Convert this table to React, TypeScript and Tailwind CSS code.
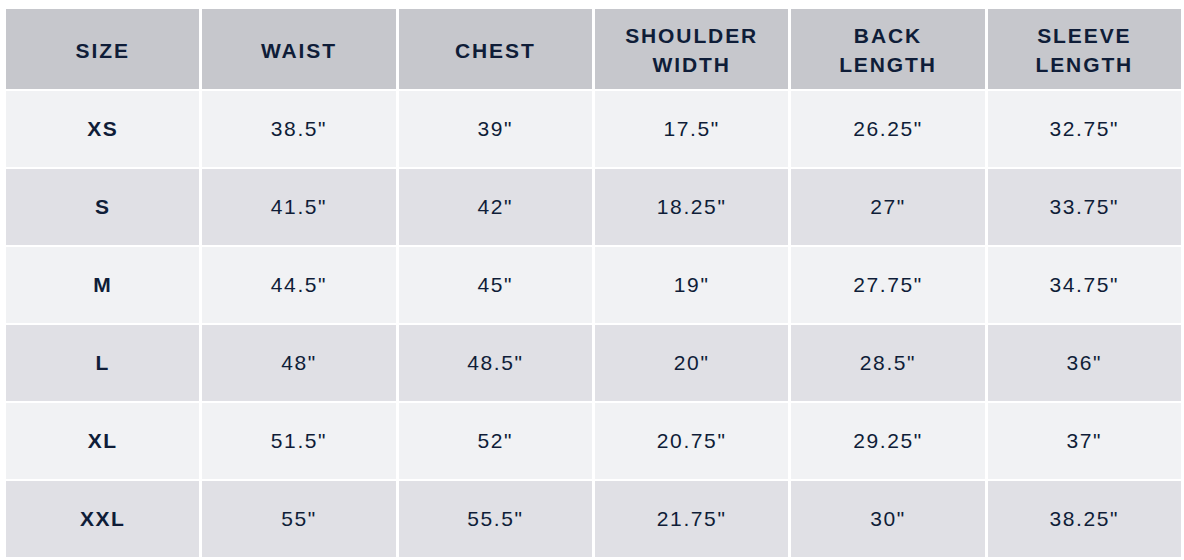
import React from "react";

const headers = [["SIZE"], ["WAIST"], ["CHEST"], ["SHOULDER", "WIDTH"], ["BACK", "LENGTH"], ["SLEEVE", "LENGTH"]];
const rows = [
  ["XS", '38.5"', '39"', '17.5"', '26.25"', '32.75"'],
  ["S", '41.5"', '42"', '18.25"', '27"', '33.75"'],
  ["M", '44.5"', '45"', '19"', '27.75"', '34.75"'],
  ["L", '48"', '48.5"', '20"', '28.5"', '36"'],
  ["XL", '51.5"', '52"', '20.75"', '29.25"', '37"'],
  ["XXL", '55"', '55.5"', '21.75"', '30"', '38.25"'],
];

export default function App() {
  return (
    <div className="w-[1184px] h-[560px] bg-white overflow-hidden text-[#0f1d38]" style={{ fontFamily: '"Liberation Sans", Arial, sans-serif' }}>
      <div className="ml-[6px] mt-[9px] w-[1175px] grid grid-cols-6 gap-x-[3px] gap-y-[2px]">
        {headers.map((h, i) => (
          <div key={i} className="h-[80px] bg-[#c6c7cc] flex flex-col items-center justify-center text-[21px] font-bold tracking-[1.9px] leading-[29px] pt-[2px]">
            {h.map((l) => (
              <span key={l}>{l}</span>
            ))}
          </div>
        ))}
        {rows.map((r, ri) =>
          r.map((c, ci) => (
            <div
              key={ri + "-" + ci}
              className={
                "h-[76px] flex items-center justify-center text-[21px] " +
                (ri % 2 === 0 ? "bg-[#f1f2f4] " : "bg-[#e0e0e5] ") +
                (ci === 0 ? "font-bold tracking-[1.5px]" : "font-normal tracking-[1.6px]")
              }
            >
              {c}
            </div>
          ))
        )}
      </div>
    </div>
  );
}
